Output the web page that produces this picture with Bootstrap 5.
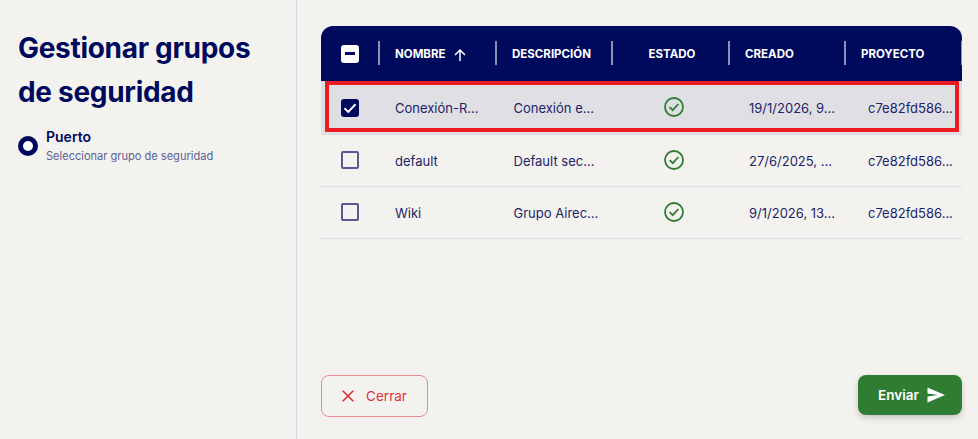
<!DOCTYPE html>
<html lang="es">
<head>
    <meta charset="UTF-8">
    <meta name="viewport" content="width=device-width, initial-scale=1.0">
    <title>Gestionar grupos de seguridad</title>
    <link href="https://cdn.jsdelivr.net/npm/bootstrap@5.3.0/dist/css/bootstrap.min.css" rel="stylesheet">
    <style>
        html, body { height: 100%; }
        body { background: #f4f2ef; color: #000a5c; font-family: Inter, "Liberation Sans", sans-serif; overflow: hidden; }
        .side-panel { width: 297px; flex: none; padding: 26px 18px 0; border-right: 1px solid #d4d3de; }
        .side-title { font-size: 28px; font-weight: 700; line-height: 44px; margin: 0 0 14px; letter-spacing: -0.3px; }
        .step-dot { width: 20px; height: 20px; border: 5px solid #000a5c; border-radius: 50%; background: #fff; flex: none; margin-top: 8px; }
        .step-name { font-size: 14px; font-weight: 600; line-height: 17px; }
        .step-sub { font-size: 11.05px; line-height: 16px; color: #5a5f92; margin-top: 3px; }
        .main-panel { padding: 26px 16px 22px 24px; min-width: 0; }
        .table-box { position: relative; }
        .sg-table { width: 641px; table-layout: fixed; border-collapse: separate; border-spacing: 0; margin: 0; }
        .sg-table th { background: #000a5c; color: #fff; height: 55px; font-size: 11.5px; font-weight: 700; padding: 2px 0 0 16px; position: relative; white-space: nowrap; }
        .sg-table th:first-child { border-top-left-radius: 12px; padding: 0 0 0 20px; }
        .sg-table th:last-child { border-top-right-radius: 12px; }
        .sg-table th + th::before { content: ""; position: absolute; left: -1px; top: 15px; height: 24px; width: 2px; background: #8c90b5; }
        .sg-table th.last-sep::after { content: ""; position: absolute; right: 0; top: 15px; height: 24px; width: 1px; background: #8c90b5; }
        .sg-table th.state-head { padding-left: 3px; text-align: center; }
        .sg-table td { height: 52px; padding: 2px 0 0 17.5px; font-size: 13px; color: #1b2468; border-bottom: 1px solid #dcdbe6; white-space: nowrap; overflow: hidden; vertical-align: middle; background: transparent; }
        .sg-table td:first-child { padding: 0 0 2px 20px; }
        .sg-table td.name-cell { padding-left: 16px; }
        .sg-table td.state-cell { padding: 0 0 0 6px; text-align: center; }
        .sg-table td.date-cell { padding-left: 20px; }
        .sg-table td.project-cell { padding-left: 23px; }
        .sg-table tr.row-on td { background: #e0dfe4; height: 54px; }
        .sg-table tr.row-on td:first-child { padding-bottom: 0; }
        .head-check { width: 18px; height: 18px; background: #fff; border-radius: 3px; display: flex; align-items: center; justify-content: center; }
        .head-check span { width: 10px; height: 2.5px; background: #000a5c; }
        .row-check { width: 18px; height: 18px; border: 2px solid #545a92; border-radius: 2px; display: block; }
        .row-check.on { background: #000a5c; border: 0; border-radius: 3px; }
        .row-check svg { display: block; }
        .state-icon { display: block; margin: 0 auto 1px; }
        .mark-frame { position: absolute; left: 4px; top: 55px; width: 634px; height: 51px; border: 4px solid #ed1c24; pointer-events: none; }
        .btn-close-sg { width: 107px; height: 42px; border: 1px solid #e98d8f; border-radius: 8px; color: #d9343a; font-size: 13.5px; background: transparent; gap: 12px; }
        .btn-send-sg { width: 104px; height: 40px; border: 0; border-radius: 8px; background: #2e7d32; color: #fff; font-size: 13.5px; font-weight: 600; box-shadow: 0 3px 6px rgba(0,0,0,.18); gap: 8px; padding: 0 0 0 3px; }
        .btn-send-sg:hover { background: #2e7d32; color: #fff; }
        .sort-icon { margin-left: 5px; }
    </style>
</head>
<body>

<div class="d-flex h-100">
    <div class="side-panel">
        <h1 class="side-title">Gestionar grupos de seguridad</h1>
        <div class="d-flex gap-2">
            <div class="step-dot"></div>
            <div>
                <div class="step-name">Puerto</div>
                <div class="step-sub">Seleccionar grupo de seguridad</div>
            </div>
        </div>
    </div>

    <div class="main-panel flex-grow-1 d-flex flex-column justify-content-between">
        <div class="table-box">
            <table class="sg-table">
                <colgroup>
                    <col style="width:58px"><col style="width:117px"><col style="width:116px"><col style="width:117px"><col style="width:116px"><col style="width:117px">
                </colgroup>
                <thead>
                    <tr>
                        <th><div class="head-check"><span></span></div></th>
                        <th>NOMBRE <svg class="sort-icon" width="14" height="14" viewBox="0 0 14 14" fill="none" stroke="#fff" stroke-width="1.5"><path d="M7 13V2M2 7l5-5 5 5"/></svg></th>
                        <th>DESCRIPCIÓN</th>
                        <th class="state-head">ESTADO</th>
                        <th>CREADO</th>
                        <th class="last-sep">PROYECTO</th>
                    </tr>
                </thead>
                <tbody>
                    <tr class="row-on">
                        <td><span class="row-check on"><svg width="18" height="18" viewBox="0 0 18 18" fill="none" stroke="#fff" stroke-width="2"><path d="M3.5 9.3l3.8 3.6 7.2-7.6"/></svg></span></td>
                        <td class="name-cell">Conexión-R...</td>
                        <td>Conexión e...</td>
                        <td class="state-cell"><svg class="state-icon" width="20" height="20" viewBox="0 0 20 20" fill="none" stroke="#2e7d32" stroke-width="1.8"><circle cx="10" cy="10" r="9"/><path d="M5.6 10.2l3.1 3 5.7-6.2"/></svg></td>
                        <td class="date-cell">19/1/2026, 9...</td>
                        <td class="project-cell">c7e82fd586...</td>
                    </tr>
                    <tr>
                        <td><span class="row-check"></span></td>
                        <td class="name-cell">default</td>
                        <td>Default sec...</td>
                        <td class="state-cell"><svg class="state-icon" width="20" height="20" viewBox="0 0 20 20" fill="none" stroke="#2e7d32" stroke-width="1.8"><circle cx="10" cy="10" r="9"/><path d="M5.6 10.2l3.1 3 5.7-6.2"/></svg></td>
                        <td class="date-cell">27/6/2025, ...</td>
                        <td class="project-cell">c7e82fd586...</td>
                    </tr>
                    <tr>
                        <td><span class="row-check"></span></td>
                        <td class="name-cell">Wiki</td>
                        <td>Grupo Airec...</td>
                        <td class="state-cell"><svg class="state-icon" width="20" height="20" viewBox="0 0 20 20" fill="none" stroke="#2e7d32" stroke-width="1.8"><circle cx="10" cy="10" r="9"/><path d="M5.6 10.2l3.1 3 5.7-6.2"/></svg></td>
                        <td class="date-cell">9/1/2026, 13...</td>
                        <td class="project-cell">c7e82fd586...</td>
                    </tr>
                </tbody>
            </table>
            <div class="mark-frame"></div>
        </div>

        <div class="d-flex justify-content-between align-items-start">
            <button type="button" class="btn btn-close-sg d-flex align-items-center justify-content-center p-0">
                <svg width="12" height="12" viewBox="0 0 12 12" fill="none" stroke="#d9343a" stroke-width="1.6"><path d="M0.7 0.7l10.6 10.6M11.3 0.7L0.7 11.3"/></svg>
                Cerrar
            </button>
            <button type="button" class="btn btn-send-sg d-flex align-items-center justify-content-center">
                Enviar
                <svg width="18" height="16" viewBox="0 0 18 16" fill="#fff"><path d="M0.5 0.5L18 8 0.5 15.5V9.6L11 8 0.5 6.4z"/></svg>
            </button>
        </div>
    </div>
</div>

<script src="https://cdn.jsdelivr.net/npm/bootstrap@5.3.0/dist/js/bootstrap.bundle.min.js"></script>
</body>
</html>
